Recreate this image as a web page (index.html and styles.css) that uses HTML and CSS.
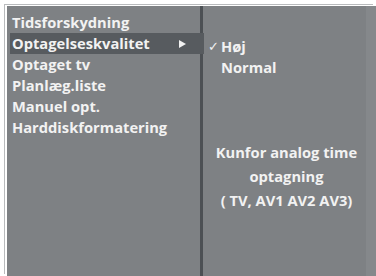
FILE: index.html
```html
<!DOCTYPE html>
<html lang="da">
<head>
<meta charset="utf-8">
<link rel="stylesheet" href="styles.css">
</head>
<body>
<div class="frame">
  <div class="screen">
    <div class="menu">
      <div class="row">Tidsforskydning</div>
      <div class="row active">Optagelseskvalitet<span class="arrow"></span></div>
      <div class="row">Optaget tv</div>
      <div class="row">Planlæg.liste</div>
      <div class="row">Manuel opt.</div>
      <div class="row">Harddiskformatering</div>
    </div>
    <div class="divider"></div>
    <div class="sub">
      <div class="options">
        <div class="opt"><span class="check">✓</span>Høj</div>
        <div class="opt"><span class="check"></span>Normal</div>
      </div>
      <div class="info">Kunfor analog time<br>optagning<br>( TV, AV1 AV2 AV3)</div>
    </div>
  </div>
</div>
</body>
</html>
```

FILE: styles.css
```css
html, body {
  margin: 0;
  padding: 0;
  background: #ffffff;
}
body {
  width: 376px;
  height: 276px;
  overflow: hidden;
  font-family: "Open Sans", "Liberation Sans", sans-serif;
  font-weight: 700;
  font-size: 14.7px;
  color: #f2f2f2;
}
.frame {
  padding: 6px 0 0 7px;
  height: 270px;
  box-sizing: content-box;
}
.screen {
  display: flex;
  height: 270px;
  background: #7e8184;
  box-shadow: -2px -1px 0 0 #ffffff, -3px -2px 0 0 #b9bbbd;
}
.menu {
  width: 193px;
  padding-top: 6px;
  box-sizing: border-box;
}
.row {
  height: 21px;
  line-height: 21px;
  padding-left: 5px;
  white-space: nowrap;
  position: relative;
}
.row.active {
  background: #575b5f;
  margin-left: 3px;
  margin-right: -4px;
  padding-left: 2px;
}
.arrow {
  position: absolute;
  left: 169px;
  top: 7px;
  width: 0;
  height: 0;
  border-left: 7px solid #f2f2f2;
  border-top: 4px solid transparent;
  border-bottom: 4px solid transparent;
}
.divider {
  width: 3px;
  background: #4c5054;
}
.sub {
  flex: 1;
  display: flex;
  flex-direction: column;
  background: linear-gradient(to right, #7e8184 0, #7e8184 163px, #85888b 163px);
}
.options {
  padding-top: 30px;
}
.opt {
  height: 21px;
  line-height: 21px;
  padding-left: 5px;
  display: flex;
}
.check {
  width: 13px;
  font-size: 13px;
  font-weight: 400;
}
.info {
  margin-top: 62px;
  text-align: center;
  line-height: 24px;
  padding-right: 6px;
}
```
